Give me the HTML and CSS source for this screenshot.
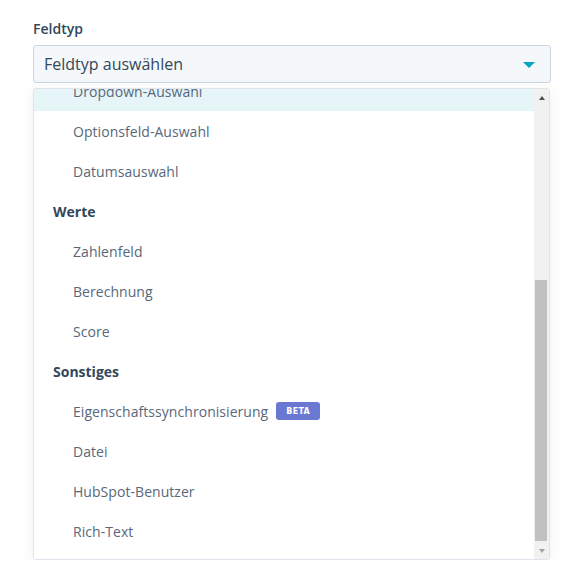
FILE: index.html
```html
<!DOCTYPE html>
<html lang="de">
<head>
<meta charset="utf-8">
<link rel="stylesheet" href="styles.css">
</head>
<body>
<div class="field">
  <div class="label">Feldtyp</div>
  <div class="select">
    <span class="select-text">Feldtyp auswählen</span>
    <span class="caret"></span>
  </div>
  <div class="panel">
    <div class="viewport">
      <ul class="list">
        <li class="item active">Dropdown-Auswahl</li>
        <li class="item">Optionsfeld-Auswahl</li>
        <li class="item">Datumsauswahl</li>
        <li class="group">Werte</li>
        <li class="item">Zahlenfeld</li>
        <li class="item">Berechnung</li>
        <li class="item">Score</li>
        <li class="group">Sonstiges</li>
        <li class="item">Eigenschaftssynchronisierung <span class="badge">BETA</span></li>
        <li class="item">Datei</li>
        <li class="item">HubSpot-Benutzer</li>
        <li class="item">Rich-Text</li>
      </ul>
    </div>
    <div class="scrollbar">
      <div class="arrow up"></div>
      <div class="track"><div class="thumb"></div></div>
      <div class="arrow down"></div>
    </div>
  </div>
</div>
</body>
</html>
```
FILE: styles.css
```css
html, body {
  margin: 0;
  background: #ffffff;
  font-family: "Open Sans", "Noto Sans", sans-serif;
  color: #33475b;
}
.field {
  padding: 20px 35px 0 33px;
  width: 518px;
}
.label {
  font-size: 14px;
  font-weight: 600;
  line-height: 18px;
  color: #33475b;
  margin-bottom: 7px;
}
.select {
  height: 36px;
  border: 1px solid #cbd6e2;
  border-radius: 3px;
  background: #f5f8fa;
  display: flex;
  align-items: center;
  justify-content: space-between;
  padding: 0 15px 0 10px;
}
.select-text {
  font-size: 16px;
  color: #33475b;
}
.caret {
  width: 0;
  height: 0;
  border-left: 6px solid transparent;
  border-right: 6px solid transparent;
  border-top: 6px solid #00a4bd;
  margin-top: 1px;
}
.panel {
  margin-top: 5px;
  width: 515px;
  height: 470px;
  border: 1px solid #dfe3eb;
  border-radius: 3px;
  background: #fff;
  display: flex;
  box-shadow: 0 2px 14px rgba(45, 62, 80, 0.07);
  overflow: hidden;
}
.viewport {
  flex: 1;
  overflow: hidden;
}
.list {
  list-style: none;
  margin: -18px 0 0 0;
  padding: 0;
}
.item, .group {
  height: 40px;
  display: flex;
  align-items: center;
  font-size: 14px;
}
.item {
  padding-left: 39px;
  color: #58687a;
  letter-spacing: 0.05px;
}
.item.active {
  background: #e5f5f8;
}
.group {
  padding-left: 19px;
  font-weight: 700;
  color: #33475b;
}
.badge {
  display: inline-flex;
  align-items: center;
  margin-left: 8px;
  height: 18px;
  padding: 0 10px;
  border-radius: 3px;
  background: #6a78d1;
  color: #fff;
  font-family: "DejaVu Sans", sans-serif;
  font-size: 8px;
  font-weight: 700;
  letter-spacing: 0.3px;
}
.scrollbar {
  width: 15px;
  background: #f1f1f1;
  display: flex;
  flex-direction: column;
}
.arrow {
  height: 17px;
  display: flex;
  align-items: center;
  justify-content: center;
}
.arrow::before {
  content: "";
  width: 0;
  height: 0;
  border-left: 3px solid transparent;
  border-right: 3px solid transparent;
}
.arrow.up::before {
  border-bottom: 4px solid #505050;
}
.arrow.down::before {
  border-top: 4px solid #a3a3a3;
}
.track {
  flex: 1;
  display: flex;
  flex-direction: column;
  justify-content: flex-end;
  padding: 0 2px 1px 1px;
}
.thumb {
  height: 261px;
  background: #c1c1c1;
}
```
